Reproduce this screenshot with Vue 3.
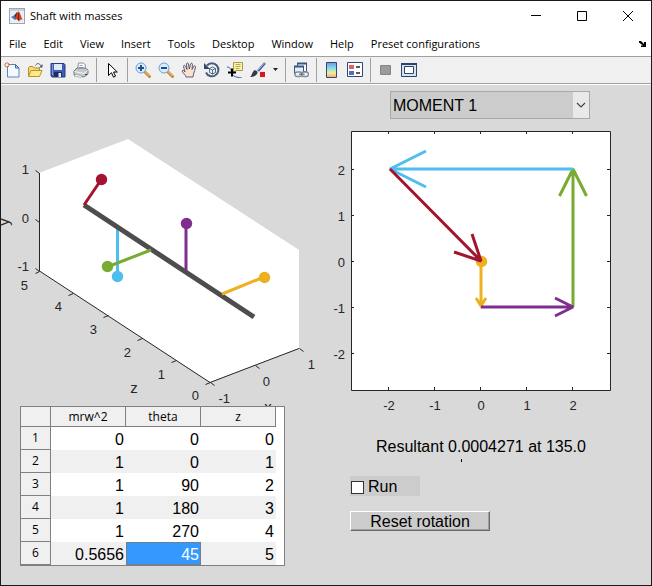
<script setup>
import { ref } from 'vue'

const menus = ['File', 'Edit', 'View', 'Insert', 'Tools', 'Desktop', 'Window', 'Help', 'Preset configurations']
const moment = ref('MOMENT 1')
const running = ref(false)
const selected = ref('5-1')

const columns = ['mrw^2', 'theta', 'z']
const rows = [
  ['0', '0', '0'],
  ['1', '0', '1'],
  ['1', '90', '2'],
  ['1', '180', '3'],
  ['1', '270', '4'],
  ['0.5656', '45', '5']
]

const shaftTicks = [
  [39, 173, -4, -3], [39, 222, -4, -3], [39, 271, -4, -3],
  [39, 271, -4, 2], [73, 293, -5, 2], [108, 315, -5, 2], [142, 338, -5, 2], [176, 360, -5, 2], [210, 382, -5, 2],
  [210, 382, 4, 3], [255, 365, 4, 3], [299, 348, 4, 3]
]
const shaftLabels = [
  ['1', 29, 174], ['0', 29, 223], ['-1', 29, 271],
  ['5', 28, 290], ['4', 62, 311], ['3', 97, 334], ['2', 131, 357], ['1', 165, 379], ['0', 199, 400],
  ['-1', 230, 403], ['0', 270, 386], ['1', 315, 369]
]

const unit = [-2, -1, 0, 1, 2]
const px = (v) => Math.round(481 + v * 46)
const py = (v) => Math.round(261 - v * 46)
</script>

<template>
  <div class="window">
    <header class="titlebar">
      <svg class="app-icon" width="16" height="16" viewBox="0 0 16 16">
        <rect x="0.5" y="0.5" width="15" height="15" fill="#e9eff5" stroke="#9aa6b2" />
        <path d="M1 1h14v2H1z" fill="#c6d2de" />
        <path d="M2 9l3-1.500 3 3.500-2 1z" fill="#3d7fae" />
        <path d="M5 7.500L8 4l1 1-2 6z" fill="#5a3340" />
        <path d="M6 10.500C7.500 9 8 3.500 9.500 3.500S12 9.500 14 12c-1.500-.8-2.500-.5-4 1.500C9 13 8 10.500 6 10.500z" fill="#d2451e" />
        <path d="M9.500 4c.8 1.500.8 5 .5 9L8.500 11z" fill="#7d2416" />
      </svg>
      <h1>Shaft with masses</h1>
      <div class="window-buttons">
        <button aria-label="Minimize"><svg width="12" height="12" viewBox="0 0 12 12"><path d="M1 5.500h10" /></svg></button>
        <button aria-label="Maximize"><svg width="12" height="12" viewBox="0 0 12 12"><path d="M1.500 1.500h9v9h-9z" /></svg></button>
        <button aria-label="Close"><svg width="12" height="12" viewBox="0 0 12 12"><path d="M1 1l10 10M11 1L1 11" /></svg></button>
      </div>
    </header>

    <nav class="menubar">
      <button v-for="m in menus" :key="m">{{ m }}</button>
      <button class="dock" aria-label="Dock figure">
        <svg width="8" height="8" viewBox="0 0 8 8"><path d="M0 1h2l3 3V2h2v5H2V5.500h2L0 2.500z" fill="#000" /></svg>
      </button>
    </nav>

    <div class="toolbar">
      <button aria-label="New figure">
        <svg width="16" height="16" viewBox="0 0 16 16">
          <path d="M3.500 2.500h8l3.500 3.500v9H3.500z" fill="#f4f9ff" stroke="#5b87b8" />
          <path d="M11.500 2.500V6H15z" fill="#b9d3ee" stroke="#3c6ba3" />
          <path d="M3 0v6M0 3h6M1 1l4 4M5 1L1 5" stroke="#c4744f" />
          <circle cx="3" cy="3" r="1.300" fill="#ffe9b8" />
        </svg>
      </button>
      <button aria-label="Open file">
        <svg width="16" height="16" viewBox="0 0 16 16">
          <path d="M1.500 14V5.500l1-1H6L7.500 6h5v8z" fill="#f6d870" stroke="#b08e2c" />
          <path d="M1.500 14.500L4 8.500h11l-2.500 6z" fill="#ffe98d" stroke="#b8942d" />
          <path d="M8.500 3.500C10 .8 12.500 1 13.500 3.500" fill="none" stroke="#44566f" />
          <path d="M15.500 2v3.500H12z" fill="#44566f" />
        </svg>
      </button>
      <button aria-label="Save figure">
        <svg width="16" height="16" viewBox="0 0 16 16">
          <path d="M1 1.500h13l1 1V15H2l-1-1z" fill="#3f5cb8" stroke="#263a86" />
          <path d="M4 2h8v6H4z" fill="#dfeaf9" />
          <path d="M2.500 2v11" stroke="#7d98e3" />
          <path d="M4 10h8v5H4z" fill="#1f2c5f" />
          <path d="M8.500 11h2.500v4H8.500z" fill="#e9eef8" />
        </svg>
      </button>
      <button aria-label="Print figure">
        <svg width="16" height="16" viewBox="0 0 16 16">
          <path d="M4.500 7l1-6h5l2 2-.8 5z" fill="#fdfdfd" stroke="#8b8f94" />
          <path d="M6.500 3.500h3M6 5.500h4" stroke="#86a8cd" />
          <path d="M1 9l3-3h8l3 2v4l-4 3-10-2z" fill="#c5c8cb" stroke="#76797d" />
          <path d="M1.500 9.500l9.500 2 3.500-3" fill="none" stroke="#f5f5f5" />
          <path d="M3 12.500l6 1.500-1 1.500-7-1.500z" fill="#fff" stroke="#8d8d8d" stroke-width="0.600" />
          <path d="M12 12.500h2" stroke="#3a3a3a" />
        </svg>
      </button>
      <i class="sep"></i>
      <button aria-label="Edit plot">
        <svg width="16" height="16" viewBox="0 0 16 16">
          <path d="M4.500 1.500v12l3-2.800 2 4.500 2-1-2-4.200h3.800z" fill="#fff" stroke="#000" />
        </svg>
      </button>
      <i class="sep"></i>
      <button aria-label="Zoom in">
        <svg width="16" height="16" viewBox="0 0 16 16">
          <path d="M9.500 9.500l5 5" stroke="#c98a3c" stroke-width="3" stroke-linecap="round" />
          <path d="M9.500 9l5 5" stroke="#f2c77e" />
          <circle cx="6" cy="6" r="5" fill="#d8eefb" stroke="#6f9fca" />
          <path d="M3 6h6M6 3v6" stroke="#1f4f93" stroke-width="2" />
        </svg>
      </button>
      <button aria-label="Zoom out">
        <svg width="16" height="16" viewBox="0 0 16 16">
          <path d="M9.500 9.500l5 5" stroke="#c98a3c" stroke-width="3" stroke-linecap="round" />
          <path d="M9.500 9l5 5" stroke="#f2c77e" />
          <circle cx="6" cy="6" r="5" fill="#d8eefb" stroke="#6f9fca" />
          <path d="M3 6h6" stroke="#1f4f93" stroke-width="2" />
        </svg>
      </button>
      <button aria-label="Pan">
        <svg width="16" height="16" viewBox="0 0 16 16">
          <path d="M5 15c0-2-3-3.500-4-6 .5-1.200 2-.8 3 1L2.500 4.500C2.500 3 4 3 4.500 4.200L6 7.500 5.500 2c.3-1.300 1.700-1.300 2 0l.8 5L9.500 2c.4-1.200 1.800-1 2 .3L11 7.500l1.800-3.200c.7-1 2-.4 1.700.8-.5 2-1 5-2 7L12 15z" fill="#fbe0cd" stroke="#4d4c70" stroke-width="0.900" />
        </svg>
      </button>
      <button aria-label="Rotate 3D">
        <svg width="16" height="16" viewBox="0 0 16 16">
          <path d="M3 3.500A6.500 6.500 0 1 1 2 10.500" fill="none" stroke="#475d7c" stroke-width="2" />
          <path d="M0 1v6h6z" fill="#34496a" />
          <path d="M5.500 6.500l3-1.500 3 1.500v4l-3 1.500-3-1.500zM5.500 6.500l3 1.500 3-1.500M8.500 8v4" fill="#e8f0f8" stroke="#445b7b" stroke-width="0.900" />
        </svg>
      </button>
      <button aria-label="Data cursor">
        <svg width="16" height="16" viewBox="0 0 16 16">
          <path d="M0 5c3 0 4 2 5 6s4 4 10 5" fill="none" stroke="#4256b0" />
          <path d="M6.500.5h9v8H9l-2.500 2z" fill="#fdf3a0" stroke="#a59a50" />
          <path d="M8.500 2.500h5M8.500 4.500h5M8.500 6.500h4" stroke="#b5aa62" />
          <path d="M1 10.500h8M5 6.500v8" stroke="#000" stroke-width="2" />
        </svg>
      </button>
      <button aria-label="Brush data">
        <svg width="16" height="16" viewBox="0 0 16 16">
          <path d="M15 1L8 9" stroke="#53609c" stroke-width="2.500" />
          <path d="M14.500 1L8 8" stroke="#aeb8e2" />
          <path d="M0 15c2-1 1.500-4 4-6.500 1.500-1 4 .5 3.500 2.500C6.500 13.500 4 15 0 15z" fill="#383b46" />
          <path d="M10 10h5v5h-5z" fill="#d91717" />
        </svg>
      </button>
      <button class="caret" aria-label="Brush colours">
        <svg width="5" height="3" viewBox="0 0 5 3"><path d="M0 0h5L2.500 3z" fill="#222" /></svg>
      </button>
      <i class="sep"></i>
      <button aria-label="Link plot">
        <svg width="16" height="16" viewBox="0 0 16 16">
          <path d="M4.500 1.500h9v8h-9z" fill="#f7fbff" stroke="#385780" />
          <path d="M4 1.500h10" stroke="#385780" stroke-width="2" />
          <path d="M1.500 4.500h9v7h-9z" fill="#e5eefa" stroke="#385780" />
          <path d="M1 4.500h10" stroke="#385780" stroke-width="2" />
          <rect x="2" y="10" width="7" height="4.500" rx="2.200" fill="#f2f2f2" stroke="#7d8b9c" stroke-width="1.400" />
          <rect x="8.500" y="10" width="7" height="4.500" rx="2.200" fill="#f2f2f2" stroke="#7d8b9c" stroke-width="1.400" />
          <path d="M6 12.200h5.500" stroke="#566475" stroke-width="1.200" />
        </svg>
      </button>
      <i class="sep"></i>
      <button aria-label="Insert colorbar">
        <svg width="16" height="16" viewBox="0 0 16 16">
          <defs>
            <linearGradient id="bar" x1="0" y1="0" x2="0" y2="1">
              <stop offset="0" stop-color="#7292e8" /><stop offset="0.400" stop-color="#86e3ed" />
              <stop offset="0.700" stop-color="#f7ed8a" /><stop offset="1" stop-color="#f2a28c" />
            </linearGradient>
          </defs>
          <path d="M2.500.5h10v15h-10z" fill="url(#bar)" stroke="#33486e" />
        </svg>
      </button>
      <button aria-label="Insert legend">
        <svg width="16" height="16" viewBox="0 0 16 16">
          <path d="M.5.500h15v14H.5z" fill="#fff" stroke="#33486e" />
          <path d="M2 3h5v4H2z" fill="#e0605f" /><path d="M2 9h5v4H2z" fill="#5468c8" />
          <path d="M9 5h4M9 11h4" stroke="#222" stroke-width="1.500" />
        </svg>
      </button>
      <i class="sep"></i>
      <button aria-label="Hide plot tools">
        <svg width="16" height="16" viewBox="0 0 16 16"><path d="M2.500 3.500h10v9h-10z" fill="#9b9b9b" stroke="#858585" /></svg>
      </button>
      <button aria-label="Show plot tools">
        <svg width="16" height="16" viewBox="0 0 16 16">
          <path d="M.5 1.500h15v13H.5z" fill="#d6e3f3" stroke="#2d446d" />
          <path d="M0 2h16" stroke="#2d446d" stroke-width="2" />
          <path d="M3.500 4.500h9v7h-9z" fill="#fff" stroke="#2d446d" />
        </svg>
      </button>
    </div>

    <main class="figure">
      <section class="left">
        <svg class="plot" viewBox="1 85 329 321" role="img" aria-label="Shaft with masses in three dimensions">
          <path d="M39 173L128 139L299 250V348L210 382L39 271z" fill="#fff" />
          <path d="M39.500 173V271L210 382.500L299 348.500" class="axis" />
          <path v-for="(t, i) in shaftTicks" :key="'t' + i" :d="`M${t[0]}.5 ${t[1]}.5l${t[2]} ${t[3]}`" class="axis" />
          <text v-for="(l, i) in shaftLabels" :key="'l' + i" :x="l[1]" :y="l[2]" text-anchor="end">{{ l[0] }}</text>
          <text x="134" y="393" text-anchor="middle" class="name">z</text>
          <text x="268" y="412" text-anchor="middle" class="name">x</text>
          <text transform="translate(9 222) rotate(-90)" text-anchor="middle" class="name">y</text>
          <g fill="none" stroke-width="3">
            <path d="M117.500 229V276" stroke="#4dbeee" />
            <path d="M84 205L254 317" stroke="#4d4d4d" stroke-width="5" />
            <path d="M84 205L101 180" stroke="#a2142f" />
            <path d="M151 250L107 267" stroke="#77ac30" />
            <path d="M186 270V223" stroke="#7e2f8e" />
            <path d="M222 294L264 277" stroke="#edb120" />
          </g>
          <circle cx="101.500" cy="179.500" r="5.700" fill="#a2142f" />
          <circle cx="117.500" cy="276.500" r="5.700" fill="#4dbeee" />
          <circle cx="107.500" cy="266.500" r="5.700" fill="#77ac30" />
          <circle cx="186.500" cy="223.500" r="5.700" fill="#7e2f8e" />
          <circle cx="264.500" cy="277.500" r="5.700" fill="#edb120" />
        </svg>

        <div class="table-frame">
          <table>
            <thead>
              <tr>
                <th class="corner"></th>
                <th v-for="c in columns" :key="c" scope="col">{{ c }}</th>
              </tr>
            </thead>
            <tbody>
              <tr v-for="(r, i) in rows" :key="i">
                <th scope="row">{{ i + 1 }}</th>
                <td
                  v-for="(v, j) in r"
                  :key="j"
                  :class="{ selected: selected === i + '-' + j }"
                  @click="selected = i + '-' + j"
                >{{ v }}</td>
              </tr>
            </tbody>
          </table>
        </div>
      </section>

      <section class="right">
        <div class="picker">
          <select v-model="moment" aria-label="Diagram">
            <option>MOMENT 1</option>
          </select>
          <span class="picker-arrow">
            <svg width="10" height="6" viewBox="0 0 10 6"><path d="M1 1l4 4 4-4" fill="none" stroke="#444" stroke-width="1.200" /></svg>
          </span>
        </div>

        <svg class="plot" viewBox="330 119 321 300" role="img" aria-label="Moment polygon">
          <path d="M351.500 131.500H610.500V390.500H351.500z" fill="#fff" stroke="#262626" />
          <g v-for="v in unit" :key="v">
            <path :d="`M${px(v) - 1}.5 132v2M${px(v) - 1}.5 390v-3M352 ${py(v)}.5h2M610 ${py(v)}.5h-3`" class="axis" />
            <text :x="px(v)" y="410" text-anchor="middle">{{ v }}</text>
            <text x="345" :y="py(v) + 6" text-anchor="end">{{ v }}</text>
          </g>
          <g fill="none" stroke-width="3">
            <circle cx="481.500" cy="261.500" r="5.700" fill="#edb120" />
            <path d="M481 261V306M476 298L481 306L486 298" stroke="#edb120" />
            <path d="M573 307V169M559.500 196L573 169L586.500 196" stroke="#77ac30" stroke-linejoin="bevel" />
            <path d="M481 307H573M555 298L573 307L555 316" stroke="#7e2f8e" stroke-linejoin="bevel" />
            <path d="M573 169H390M426 151L390 169L426 187" stroke="#4dbeee" stroke-linejoin="bevel" />
            <path d="M390 169L481 261M472 234L481 261L454 252" stroke="#a2142f" stroke-linejoin="bevel" />
          </g>
        </svg>

        <output class="result">Resultant 0.0004271 at 135.0</output>

        <label class="run"><input v-model="running" type="checkbox" />Run</label>
        <button class="reset">Reset rotation</button>
      </section>
    </main>
  </div>
</template>

<style>
body {
  background: #d9d9d9;
}
</style>

<style scoped>
* {
  box-sizing: border-box;
}
.window {
  display: flex;
  flex-direction: column;
  min-height: 100vh;
  border: 1px solid #1c1a1c;
  background: #d9d9d9;
  color: #000;
  font: 12px/16px "Open Sans", "Noto Sans", sans-serif;
}
button {
  margin: 0;
  padding: 0;
  border: 0;
  background: none;
  color: inherit;
  font: inherit;
}
svg {
  display: block;
}
.titlebar {
  display: flex;
  align-items: center;
  height: 30px;
  padding-left: 8px;
  background: #fff;
}
.titlebar h1 {
  margin: 0 auto 0 5px;
  font-size: 11px;
  font-weight: 400;
}
.window-buttons {
  display: flex;
}
.window-buttons button {
  display: grid;
  place-items: center;
  width: 46px;
  height: 28px;
}
.window-buttons path {
  fill: none;
  stroke: #000;
}
.menubar {
  display: flex;
  align-items: center;
  gap: 1px;
  height: 26px;
  background: #fff;
  border-bottom: 1px solid #a0a0a0;
  font-size: 11px;
}
.menubar button {
  padding: 0 8px;
  white-space: nowrap;
}
.menubar .dock {
  margin-left: auto;
  padding: 0 4px;
}
.toolbar {
  display: flex;
  align-items: center;
  height: 28px;
  padding-bottom: 2px;
  background: #f0f0f0;
  border-bottom: 1px solid #fff;
  box-shadow: inset 0 -1px #a0a0a0;
}
.toolbar button {
  display: grid;
  place-items: center start;
  width: 23px;
  height: 24px;
  padding-left: 3px;
}
.toolbar .caret {
  width: 12px;
}
.sep {
  width: 1px;
  height: 24px;
  margin: 0 4px 0 3px;
  background: #a0a0a0;
}
.figure {
  display: grid;
  grid-template-columns: 329fr 321fr;
  flex: 1;
  font-family: "Liberation Sans", Arial, sans-serif;
}
.plot {
  width: 100%;
  height: auto;
  overflow: hidden;
}
.plot text {
  fill: #262626;
  font-size: 13px;
}
.plot .name {
  font-size: 15px;
}
.axis {
  fill: none;
  stroke: #262626;
}
.left {
  padding-bottom: 16px;
}
.table-frame {
  width: 265px;
  margin-left: 19px;
  border: 1px solid #808080;
  background: #fff;
}
table {
  width: 255px;
  table-layout: fixed;
  border-collapse: separate;
  border-spacing: 0;
  font-size: 16px;
}
th {
  padding: 0;
  border-right: 1px solid #808080;
  border-bottom: 1px solid #808080;
  background: #f0f0f0;
  font: 12px/16px "Open Sans", "Noto Sans", sans-serif;
}
thead th {
  height: 20px;
}
.corner {
  width: 30px;
}
td {
  height: 23px;
  padding: 2px 1px 0 0;
  border: 1px solid transparent;
  line-height: 18px;
  text-align: right;
}
tbody tr:nth-child(even) td {
  background: #f0f0f0;
}
tbody tr td.selected {
  border-color: #6f7f8f;
  background: #3399ff;
  color: #fff;
}
.right {
  padding-top: 6px;
  font-size: 16px;
}
.picker {
  display: flex;
  width: 200px;
  height: 28px;
  margin-left: 60px;
  border: 1px solid #a9a9a9;
  background: #ccc;
}
.picker select {
  flex: 1;
  padding: 2px 0 0 2px;
  border: 0;
  background: none;
  color: #000;
  font: inherit;
  appearance: none;
}
.picker-arrow {
  display: grid;
  place-items: center;
  width: 16px;
  background: #e9e9e9;
  pointer-events: none;
}
.result {
  display: block;
  width: 260px;
  margin: 18px 0 0 21px;
  line-height: 20px;
  text-align: center;
}
.result::after {
  content: "";
  display: block;
  width: 1px;
  height: 3px;
  margin: 2px 0 0 110px;
  background: #000;
}
.run {
  display: flex;
  align-items: center;
  gap: 4px;
  width: 70px;
  height: 20px;
  margin: 14px 0 0 20px;
  padding: 2px 0 0 1px;
  background: #ccc;
}
.run input {
  appearance: none;
  width: 13px;
  height: 13px;
  margin: 0;
  border: 1px solid #333;
  background: #fff;
}
.run input:checked {
  box-shadow: inset 0 0 0 2px #fff;
  background: #333;
}
.reset {
  display: block;
  width: 140px;
  height: 20px;
  margin: 15px 0 0 20px;
  border: 1px solid #fff;
  border-right-color: #696969;
  border-bottom-color: #696969;
  box-shadow: inset -1px -1px #a0a0a0;
  background: #ccc;
  line-height: 20px;
}
</style>
